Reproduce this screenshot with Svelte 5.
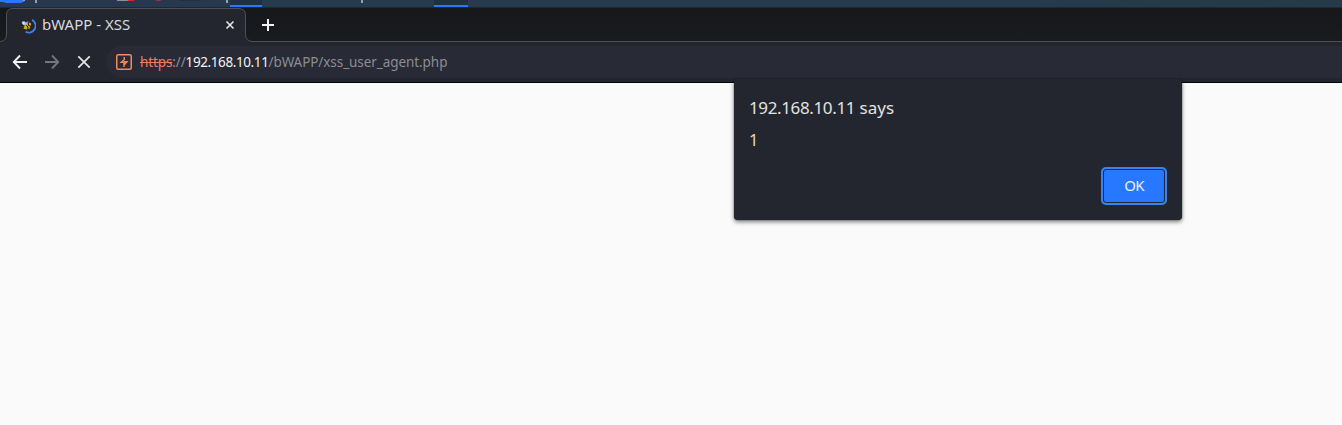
<script>
  const host = '192.168.10.11';
</script>

<div class="screen">
  <div class="desktop">
    <svg width="480" height="7" viewBox="0 0 480 7" aria-hidden="true">
      <path d="M0 0H25V1L21 3H6L3 2H0Z" fill="#2777ff" />
      <path d="M23 0h2v1h-2zM35 0h2v3h-2zM226 0h2v3h-2zM361 0h2v3h-2z" fill="#98a0aa" />
      <path d="M117 0h12v1h-12z" fill="#8d9298" />
      <path d="M127 0h8l-2 1h-4z" fill="#e12424" />
      <path d="M155 0h7l-2 1h-3z" fill="#aa2854" />
      <path d="M179 0h20v1h-20z" fill="#223040" />
      <path d="M230 0h32v7h-32zM434 0h34v7h-34z" fill="#203040" />
      <path d="M230 5h32v2h-32zM434 5h34v2h-34z" fill="#2777ff" />
    </svg>
  </div>

  <div class="tabstrip">
    <svg class="outline" width="1342" height="35" viewBox="0 0 1342 35" aria-hidden="true">
      <path d="M0 34.5Q6.5 34.5 6.5 27V8Q6.5 1.5 13 1.5H238Q245.5 1.5 245.5 8V27Q245.5 34.5 253 34.5V35H0Z" fill="#23252f" />
      <path d="M0 34.5Q6.5 34.5 6.5 27V8Q6.5 1.5 13 1.5H238Q245.5 1.5 245.5 8V27Q245.5 34.5 253 34.5H1342" fill="none" stroke="#505156" />
    </svg>
    <div class="tab">
      <svg class="favicon" width="16" height="16" viewBox="0 0 16 16" aria-hidden="true">
        <path d="M12.1 1.9A6.6 6.6 0 0 1 5.6 13.7" fill="none" stroke="#3f83f0" stroke-width="1.8" />
        <path d="M1.5 4L4 3L6 4.5L8 3L9 5L7 8L3 7Z" fill="#9dbbdc" />
        <path d="M8.2 4.4L10.8 5L11 7.5L9.8 10.6L6.5 11.5L3.8 10.8L2.6 8.8L5 7.4Z" fill="#d9a326" />
        <path d="M8 3.5L8.6 7.6L11.3 8.4M6.2 7.3L8 9L7.8 11.3M2.3 7.3L4 8.2L3 10" fill="none" stroke="#15171b" stroke-width="1" />
        <circle cx="3.6" cy="5.2" r="1" fill="#e2edf7" />
      </svg>
      <span class="title">bWAPP - XSS</span>
      <svg class="close" width="10" height="10" viewBox="0 0 10 10" aria-hidden="true">
        <path d="M1.5 1.5l7 7M8.5 1.5l-7 7" stroke="#e6e7e7" stroke-width="1.6" />
      </svg>
    </div>
    <svg class="new" width="12" height="12" viewBox="0 0 12 12" aria-hidden="true">
      <path d="M6 0v12M0 6h12" stroke="#f2f2f2" stroke-width="2" />
    </svg>
  </div>

  <div class="toolbar">
    <div class="nav">
      <svg width="16" height="16" viewBox="0 0 16 16" aria-hidden="true">
        <path d="M8 1.5L1.8 8L8 14.5M1.5 8H15" fill="none" stroke="#f1f1f1" stroke-width="1.9" />
      </svg>
      <svg width="16" height="16" viewBox="0 0 16 16" aria-hidden="true">
        <path d="M8 1.5L14.2 8L8 14.5M14.5 8H1" fill="none" stroke="#74767c" stroke-width="1.9" />
      </svg>
      <svg width="16" height="16" viewBox="0 0 16 16" aria-hidden="true">
        <path d="M2.3 2.3l11.4 11.4M13.7 2.3l-11.4 11.4" fill="none" stroke="#e8e8e9" stroke-width="1.7" />
      </svg>
    </div>
    <div class="address">
      <svg width="16" height="16" viewBox="0 0 16 16" aria-hidden="true">
        <rect x=".75" y=".75" width="14.5" height="14.5" rx="1.5" fill="none" stroke="#f08a63" stroke-width="1.5" />
        <path d="M8.3 3V5.5L5.2 8.2H8V13V11L11 7.7H8.2" fill="none" stroke="#f08a63" stroke-width="1.4" />
      </svg>
      <span class="url"><span class="scheme"><s>https</s>://</span><b>{host}</b><span class="path">/bWAPP/xss_user_agent.php</span></span>
    </div>
  </div>

  <main></main>

  <div class="dialog" role="alertdialog" aria-labelledby="origin">
    <div id="origin"><span>{host}</span> says</div>
    <div class="message">1</div>
    <button>OK</button>
  </div>
</div>

<style>
  .screen {
    position: relative;
    width: 1342px;
    height: 425px;
    display: flex;
    flex-direction: column;
    overflow: hidden;
    background: #fafafa;
    font-family: "Noto Sans", sans-serif;
  }
  svg { display: block; flex: none; }
  .desktop { height: 7px; flex: none; background: linear-gradient(90deg, #27374f, #273b4d 30%, #273a4a); }
  .tabstrip {
    position: relative;
    height: 35px;
    flex: none;
    display: flex;
    align-items: center;
    background: linear-gradient(#15171b, #1a1b1f);
    box-shadow: inset 0 1px #1e2833;
  }
  .outline { position: absolute; inset: 0; }
  .tab {
    position: relative;
    width: 246px;
    height: 35px;
    box-sizing: border-box;
    padding: 0 11px 0 20px;
    display: flex;
    align-items: center;
  }
  .favicon { margin-top: 3px; }
  .title { margin: -2px 0 0 6px; font-size: 15px; line-height: 20px; color: #d8d9da; white-space: nowrap; }
  .close { margin-left: auto; margin-top: 1px; }
  .new { position: relative; margin: 1px 0 0 16px; }
  .toolbar {
    height: 41px;
    box-sizing: border-box;
    flex: none;
    display: flex;
    align-items: flex-start;
    padding-top: 4px;
    background: #23252f;
    border-bottom: 1px solid #050507;
  }
  .nav { display: flex; gap: 16px; padding: 8px 14px 0 12px; }
  .address {
    flex: 1;
    height: 32px;
    box-sizing: border-box;
    padding-left: 10px;
    display: flex;
    align-items: center;
    gap: 8px;
    border-radius: 16px 0 0 16px;
    background: #282a35;
  }
  .url { font-size: 13.5px; line-height: 20px; color: #8b8d92; white-space: nowrap; }
  .scheme { letter-spacing: -.12px; }
  .path { letter-spacing: -.07px; }
  .url s { color: #f17858; }
  .url b { font-weight: 400; letter-spacing: -.4px; color: #f2f3f4; }
  main { flex: 1; }
  .dialog {
    position: absolute;
    left: 734px;
    top: 79px;
    width: 448px;
    height: 141px;
    box-sizing: border-box;
    padding: 17px 15px 15px;
    display: flex;
    flex-direction: column;
    border-radius: 4px;
    background: #23262e;
    box-shadow: 0 0 1px #17191f, 0 2px 4px rgba(0, 0, 0, .5);
    color: #e1e2e3;
  }
  #origin { font-size: 17px; line-height: 24px; }
  #origin span { letter-spacing: -.37px; }
  .message { margin-top: 9px; font-size: 16.5px; line-height: 22px; color: #e5d8b9; }
  button {
    width: 66px;
    height: 38px;
    margin: auto 0 0 auto;
    padding: 0 0 2px;
    border: 2px solid #3b82f5;
    border-radius: 5px;
    background: #2777ff;
    box-shadow: inset 0 0 0 1px #202838;
    color: #e9f1ff;
    font: 15px/20px "Noto Sans", sans-serif;
    letter-spacing: -.8px;
  }
</style>
